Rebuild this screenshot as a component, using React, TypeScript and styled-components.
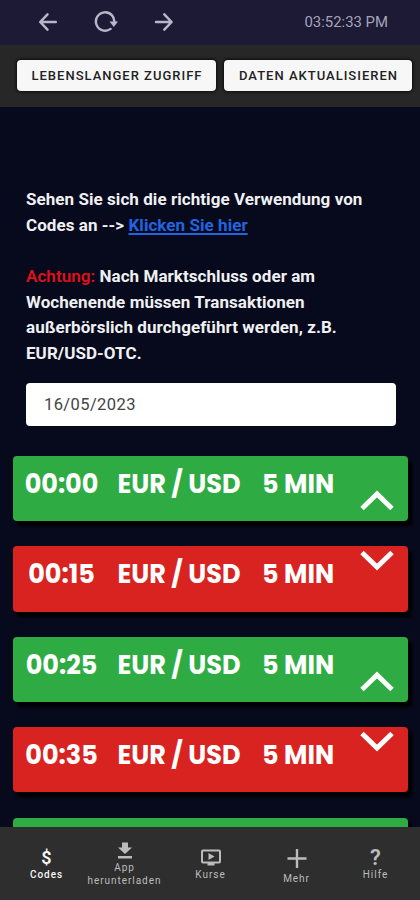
import React from "react";
import styled, { createGlobalStyle } from "styled-components";

const GlobalStyle = createGlobalStyle`
  * { box-sizing: border-box; }
  html, body { margin: 0; padding: 0; background: #060a1c; overflow: hidden; }
  button { font: inherit; border: 0; padding: 0; }
`;

const Screen = styled.div`
  display: flex;
  flex-direction: column;
  width: 420px;
  height: 900px;
  overflow: hidden;
  background: #060a1c;
  font-family: Roboto, sans-serif;
`;

const BrowserBar = styled.header`
  display: flex;
  align-items: center;
  flex: none;
  height: 45px;
  padding: 0 32px 2px 36px;
  background: #1c1a35;
  color: #b9b6cb;
`;

const NavIcons = styled.div`
  display: flex;
  gap: 34px;
  flex: 1;
`;

const NavButton = styled.button`
  display: flex;
  width: 24px;
  height: 24px;
  background: none;
  color: inherit;
`;

const Clock = styled.time`
  font-size: 14.9px;
  color: #a6a3b8;
`;

const ActionBar = styled.div`
  display: flex;
  flex: none;
  gap: 8px;
  height: 62px;
  padding: 15px 8px 0 17px;
  background: #272727;
`;

const ActionButton = styled.button<{ $width: number }>`
  width: ${(p) => p.$width}px;
  height: 31px;
  padding-left: 1px;
  border-radius: 4px;
  background: #f7f7f7;
  color: #222;
  font-size: 13px;
  font-weight: 500;
  letter-spacing: 1px;
  white-space: nowrap;
  box-shadow: 0 0 3px 1px #0c0c0c;
`;

const Content = styled.main`
  flex: 1;
  min-height: 0;
  overflow: hidden;
  padding: 80px 12px 0 13px;
`;

const Notice = styled.section`
  padding-left: 13px;
  color: #f0f0f3;
  font-size: 17px;
  font-weight: 700;
  line-height: 25.7px;
  letter-spacing: 0.06px;
`;

const NoticeLine = styled.div`
  height: 25.7px;
  white-space: nowrap;
`;

const Link = styled.a`
  color: #2264e0;
  text-decoration: underline;
  text-decoration-thickness: 1.5px;
  text-underline-offset: 2px;
`;

const Warning = styled.span`
  color: #e01018;
  font-weight: 600;
`;

const DateField = styled.div`
  display: flex;
  align-items: center;
  width: 370px;
  height: 43px;
  margin: 16.3px 0 30px 13px;
  padding-left: 18px;
  border-radius: 4px;
  background: #fff;
  color: #444;
  font-size: 16.5px;
  letter-spacing: 0.4px;
`;

const Signals = styled.div`
  display: flex;
  flex-direction: column;
  gap: 25.2px;
`;

const SignalCard = styled.article<{ $up: boolean }>`
  display: grid;
  grid-template-columns: 97px 132px 86px 1fr;
  flex: none;
  height: 65.2px;
  border-radius: 4px;
  background: ${(p) => (p.$up ? "#2eac43" : "#d92321")};
  box-shadow: 4px 5px 3px #000;
  color: #fff;
  font-family: Poppins, Inter, sans-serif;
  font-size: 25.5px;
  font-weight: 700;
  line-height: 56.5px;
  white-space: nowrap;
`;

const Time = styled.div`
  text-align: center;
`;

const Pair = styled.div`
  padding-left: 7.5px;
`;

const Duration = styled.div`
  padding-left: 20px;
`;

const Direction = styled.div<{ $up: boolean }>`
  display: flex;
  justify-content: flex-end;
  align-items: ${(p) => (p.$up ? "flex-end" : "flex-start")};
  height: 100%;
  padding: 4px 14px 10px 0;
`;

const BottomNav = styled.nav`
  display: grid;
  grid-template-columns: 78px 78px 94px 78px 80px;
  flex: none;
  height: 73.5px;
  padding-left: 7px;
  border-bottom: 1px solid #342b30;
  background: #2e2e2e;
`;

const Tab = styled.div<{ $active?: boolean; $top: number }>`
  display: flex;
  flex-direction: column;
  align-items: center;
  padding-top: ${(p) => p.$top}px;
  padding-left: 1px;
  color: ${(p) => (p.$active ? "#f5f5f5" : "#bcbcbc")};
  font-size: 10px;
  font-weight: ${(p) => (p.$active ? 500 : 400)};
  line-height: 13px;
  letter-spacing: 0.95px;
  text-align: center;
  white-space: nowrap;
`;

const TabLabel = styled.span<{ $gap: number }>`
  margin-top: ${(p) => p.$gap}px;
`;

const Glyph = styled.span<{ $size: number }>`
  height: 20px;
  font-size: ${(p) => p.$size}px;
  font-weight: 600;
  line-height: 20px;
  letter-spacing: 0;
`;

const Chevron = ({ up }: { up: boolean }) => (
  <svg width="34" height="21" viewBox="0 0 34 21" fill="none" stroke="#fff" strokeWidth="4.9">
    <path d={up ? "M2 18.5 17 4 32 18.5" : "M2 2.5 17 17 32 2.5"} />
  </svg>
);

const signals = [
  { time: "00:00", up: true },
  { time: "00:15", up: false },
  { time: "00:25", up: true },
  { time: "00:35", up: false },
];

export default function App() {
  return (
    <>
      <GlobalStyle />
      <Screen>
        <BrowserBar>
          <NavIcons>
            <NavButton aria-label="Zurück">
              <svg width="24" height="24" fill="none" stroke="currentColor" strokeWidth="2.5" strokeLinejoin="round" strokeLinecap="round">
                <path d="M19.8 12H4.5M11.5 4.3 4.2 12l7.3 7.7" />
              </svg>
            </NavButton>
            <NavButton aria-label="Neu laden">
              <svg width="24" height="24" fill="none" stroke="currentColor" strokeWidth="2.4">
                <path d="M16.6 18.9A9.2 9.2 0 1 1 20.2 13" strokeLinecap="round" />
                <path d="M15.5 11.5h8.5l-4.2 5.5z" fill="currentColor" stroke="none" />
              </svg>
            </NavButton>
            <NavButton aria-label="Vorwärts">
              <svg width="24" height="24" fill="none" stroke="currentColor" strokeWidth="2.5" strokeLinejoin="round" strokeLinecap="round">
                <path d="M4 12h15.3M12.3 4.3l7.3 7.7-7.3 7.7" />
              </svg>
            </NavButton>
          </NavIcons>
          <Clock>03:52:33 PM</Clock>
        </BrowserBar>
        <ActionBar>
          <ActionButton $width={199}>LEBENSLANGER ZUGRIFF</ActionButton>
          <ActionButton $width={188}>DATEN AKTUALISIEREN</ActionButton>
        </ActionBar>
        <Content>
          <Notice>
            <NoticeLine>Sehen Sie sich die richtige Verwendung von</NoticeLine>
            <NoticeLine>Codes an --&gt; <Link>Klicken Sie hier</Link></NoticeLine>
            <NoticeLine />
            <NoticeLine><Warning>Achtung:</Warning> Nach Marktschluss oder am</NoticeLine>
            <NoticeLine>Wochenende müssen Transaktionen</NoticeLine>
            <NoticeLine>außerbörslich durchgeführt werden, z.B.</NoticeLine>
            <NoticeLine>EUR/USD-OTC.</NoticeLine>
          </Notice>
          <DateField>16/05/2023</DateField>
          <Signals>
            {signals.map(({ time, up }) => (
              <SignalCard key={time} $up={up}>
                <Time>{time}</Time>
                <Pair>EUR / USD</Pair>
                <Duration>5 MIN</Duration>
                <Direction $up={up}><Chevron up={up} /></Direction>
              </SignalCard>
            ))}
            <SignalCard $up />
          </Signals>
        </Content>
        <BottomNav>
          <Tab $active $top={21}>
            <Glyph $size={18}>$</Glyph>
            <TabLabel $gap={0}>Codes</TabLabel>
          </Tab>
          <Tab $top={15}>
            <svg width="14" height="18" fill="currentColor">
              <path d="M4 .5h6v5h4L7 12 0 5.5h4zM0 14h14v2.5H0z" />
            </svg>
            <TabLabel $gap={1}>App<br />herunterladen</TabLabel>
          </Tab>
          <Tab $top={21}>
            <svg width="20" height="20" viewBox="0 0 20 20" fill="none" stroke="currentColor" strokeWidth="2">
              <path d="M2 2.5h16a1 1 0 0 1 1 1v10a1 1 0 0 1-1 1H2a1 1 0 0 1-1-1v-10a1 1 0 0 1 1-1zM6.5 16.5h7" />
              <path d="m7.5 5 6 3.5-6 3.5z" fill="currentColor" stroke="none" />
            </svg>
            <TabLabel $gap={0}>Kurse</TabLabel>
          </Tab>
          <Tab $top={22}>
            <svg width="20" height="20" fill="none" stroke="currentColor" strokeWidth="2.4">
              <path d="M10 0v19M.5 9.5h19" />
            </svg>
            <TabLabel $gap={3}>Mehr</TabLabel>
          </Tab>
          <Tab $top={21}>
            <Glyph $size={22}>?</Glyph>
            <TabLabel $gap={0}>Hilfe</TabLabel>
          </Tab>
        </BottomNav>
      </Screen>
    </>
  );
}
